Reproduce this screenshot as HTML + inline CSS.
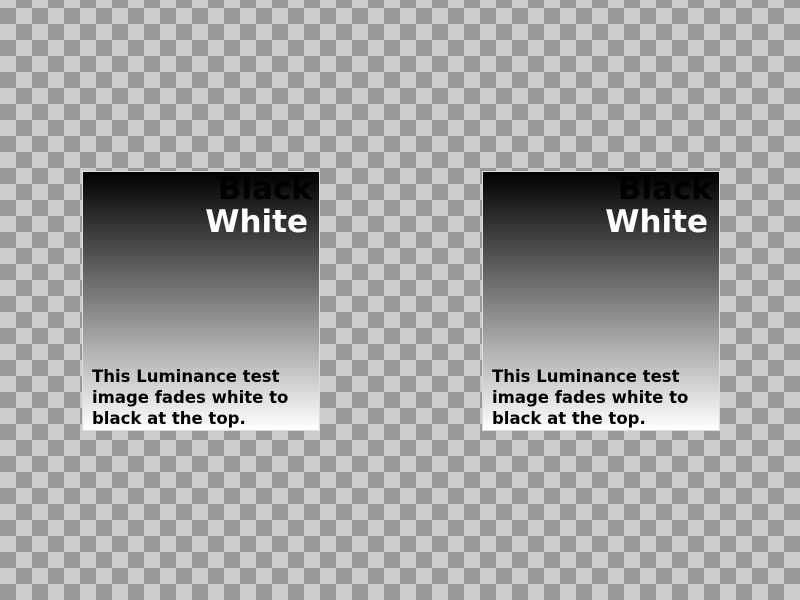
<!DOCTYPE html>
<html><head><style>
html,body{margin:0;padding:0;width:800px;height:600px;overflow:hidden}
body{background:repeating-conic-gradient(#ccc 0 25%,#999 0 50%) 16px -8px/32px 32px}
.box{position:absolute;top:171px;width:236px;height:258px;border:1px solid #ddd;background:linear-gradient(#000,#fff);overflow:hidden;font-family:"DejaVu Sans","Liberation Sans",sans-serif;font-weight:bold}
.b{position:absolute;right:7px;top:-1px;font-size:31px;color:#000;line-height:36px}
.w{position:absolute;right:11px;top:32px;font-size:31px;color:#fff;line-height:36px}
.t{position:absolute;left:9px;top:194px;font-size:16.5px;line-height:21px;color:#000}
</style></head><body>
<div class="box" style="left:82px"><div class="b">Black</div><div class="w">White</div><div class="t">This Luminance test<br>image fades white to<br>black at the top.</div></div>
<div class="box" style="left:482px"><div class="b">Black</div><div class="w">White</div><div class="t">This Luminance test<br>image fades white to<br>black at the top.</div></div>
</body></html>
